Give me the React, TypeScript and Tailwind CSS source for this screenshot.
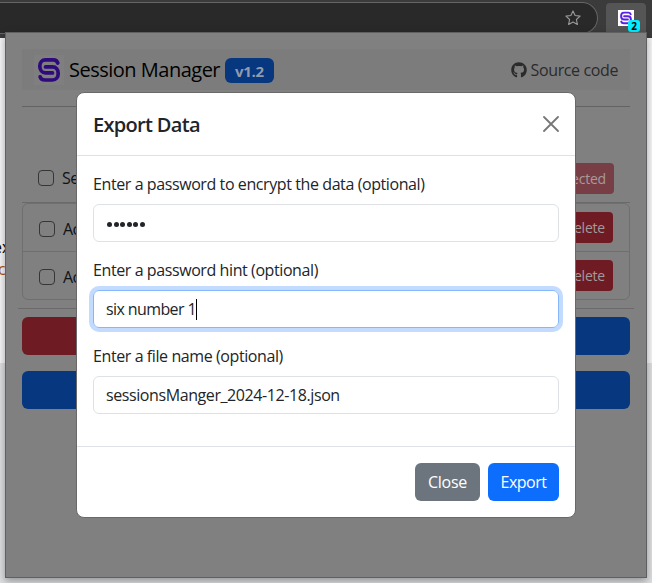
import React from "react";
import { FaGithub } from "react-icons/fa";

function Logo({ className, color }: { className: string; color: string }) {
  return (
    <svg viewBox="0 0 30 30" className={className} fill="none" stroke={color} strokeWidth="3.7" strokeLinecap="round" strokeLinejoin="round">
      <path d="M23.800 8C23 5.800 21.600 4.900 19.500 4.900H11.500C8 4.900 5.800 7.600 5.800 11.200S8 17.900 11.500 17.900H18.500" />
      <path d="M11.500 11.900H18.500C22 11.900 24.200 14.500 24.200 18.400S22 25 18.500 25H11C8.200 25 6.700 24 6.100 21.800" />
    </svg>
  );
}

function BrowserBar() {
  return (
    <div className="flex h-[38px] w-full items-start justify-between bg-[#3b3b3b] pr-[6px]">
      <div className="mt-[2px] flex h-8 w-[598px] items-center justify-end rounded-r-full border border-l-0 border-[#666] bg-[#292929] pr-[16px]">
        <svg viewBox="0 0 16 16" className="h-4 w-4" fill="none" stroke="#9a9a9a" strokeWidth="1.1" strokeLinejoin="round">
          <path d="M8 .9l2.1 4.6 5 .6-3.700 3.400 1 5L8 12l-4.400 2.500 1-5L.9 6.100l5-.6z" />
        </svg>
      </div>
      <div className="relative mt-[3px] flex h-[35px] w-10 justify-center rounded-t bg-[#555]">
        <div className="mt-[7px] h-4 w-4 bg-white">
          <Logo className="h-4 w-4" color="#5b21e6" />
        </div>
        <span className="absolute left-[22px] top-[17px] flex h-3 w-3 items-center justify-center rounded-[3px] bg-[#00f0ff] text-[10px] font-bold leading-none text-black">2</span>
      </div>
    </div>
  );
}

function Check() {
  return <span className="block h-4 w-4 shrink-0 rounded border border-[#363636]" />;
}

function DangerButton({ children, faded }: { children: React.ReactNode; faded?: boolean }) {
  return (
    <button className={`h-[31px] rounded px-2 pt-px text-[14px] leading-none tracking-[-0.2px] ${faded ? "bg-[#773f45] text-[#a79a9b]" : "bg-[#6e1b23] text-[#a39a9b]"}`}>
      {children}
    </button>
  );
}

function SessionRow() {
  return (
    <div className="flex h-[47px] items-center justify-between px-4 first:h-12 first:border-b first:border-[#6f6f6f]">
      <div className="flex items-center gap-2 pt-[2px]">
        <Check />
        <span className="tracking-[-0.5px]">Ac</span>
      </div>
      <DangerButton>Delete</DangerButton>
    </div>
  );
}

function Popup() {
  return (
    <div className="absolute left-[5px] top-8 flex h-[546px] w-[642px] flex-col border border-[#606060] bg-[#808080] px-4 pt-4 text-[#101214] shadow-[0_3px_8px_rgba(0,0,0,0.35)]">
      <nav className="flex h-[41px] items-center justify-between bg-[#7c7c7c] px-3">
        <div className="flex items-center">
          <div className="h-[30px] w-[30px] bg-[#7f7f7f]">
            <Logo className="h-[30px] w-[30px]" color="#2e0a7c" />
          </div>
          <span className="ml-[5px] w-[156px] whitespace-nowrap text-[20px] leading-[30px] tracking-[-0.5px] text-black">Session Manager</span>
          <span className="mt-[2px] flex h-[25px] w-[49px] items-center justify-center rounded-md bg-[#06377f] pt-px text-[15px] font-bold tracking-[-0.3px] text-[#8f9bae]">v1.2</span>
        </div>
        <div className="flex items-center gap-1 text-[#2b2b2b]">
          <FaGithub className="h-4 w-4" />
          <span className="pt-px tracking-[-0.38px]">Source code</span>
        </div>
      </nav>
      <div className="mt-4 h-px shrink-0 bg-[#636363]" />
      <div className="mt-[56px] flex h-[31px] items-center justify-between px-4">
        <div className="flex items-center gap-2 pb-px">
          <Check />
          <span className="tracking-[-0.5px]">Se</span>
        </div>
        <DangerButton faded>Delete selected</DangerButton>
      </div>
      <div className="mt-2 h-px shrink-0 bg-[#6a6a6a]" />
      <div className="h-[97px] shrink-0 rounded-md border border-[#6f6f6f]">
        <SessionRow />
        <SessionRow />
      </div>
      <div className="-mx-1 mt-2 h-px shrink-0 bg-[#6a6a6a]" />
      <div className="mt-2 grid grid-cols-2 gap-4">
        <div className="h-[38px] rounded-md bg-[#6e1b23]" />
        <div className="h-[38px] rounded-md bg-[#06377f]" />
        <div className="h-[38px] rounded-md bg-[#06377f]" />
        <div className="h-[38px] rounded-md bg-[#06377f]" />
      </div>
    </div>
  );
}

function Field({ label, children, focused }: { label: string; children: React.ReactNode; focused?: boolean }) {
  return (
    <div className="mb-4">
      <div className="mb-2 h-6 whitespace-nowrap leading-6 tracking-[-0.41px]">{label}</div>
      <div className={`flex h-[38px] items-center whitespace-nowrap rounded-md border px-3 ${focused ? "border-[#86b7fe] shadow-[0_0_0_4px_#c2dbfe]" : "border-[#dee2e6]"}`}>
        {children}
      </div>
    </div>
  );
}

function ExportModal() {
  return (
    <div className="absolute left-[76px] top-[92px] flex h-[426px] w-[500px] flex-col rounded-lg border border-[#696969] bg-white text-[#212529]">
      <header className="flex h-[63px] shrink-0 items-center justify-between border-b border-[#dee2e6] px-4">
        <h1 className="pt-[2px] text-[20px] font-semibold leading-[30px] tracking-[-0.68px]">Export Data</h1>
        <svg viewBox="0 0 16 16" className="h-4 w-4" stroke="#777" strokeWidth="1.8" strokeLinecap="round">
          <path d="M1 1L15 15M15 1L1 15" />
        </svg>
      </header>
      <main className="flex-1 px-4 pt-4">
        <Field label="Enter a password to encrypt the data (optional)">
          <span className="flex gap-[1.5px] pl-px pt-[2px]">
            {[0, 1, 2, 3, 4, 5].map((i) => (
              <i key={i} className="h-[5px] w-[5px] rounded-full bg-[#212529]" />
            ))}
          </span>
        </Field>
        <Field focused label="Enter a password hint (optional)">
          <span className="tracking-[-0.6px]">six number 1</span>
          <span className="h-[21px] w-px bg-black" />
        </Field>
        <Field label="Enter a file name (optional)">
          <span className="tracking-[-0.41px]">sessionsManger_2024-12-18.json</span>
        </Field>
      </main>
      <footer className="flex h-[71px] shrink-0 items-center justify-end gap-2 border-t border-[#dee2e6] px-4">
        <button className="h-[38px] w-[65px] rounded-md bg-[#6c757d] tracking-[-0.3px] text-white">Close</button>
        <button className="h-[38px] w-[71px] rounded-md bg-[#0d6efd] tracking-[-0.5px] text-white">Export</button>
      </footer>
    </div>
  );
}

export default function App() {
  return (
    <div className="relative h-[583px] w-[652px] overflow-hidden bg-[#f3f4f6] font-['Open_Sans','Noto_Sans',sans-serif] text-[16px]">
      <BrowserBar />
      <div className="h-[325px] bg-[#f6f6f8] pt-[198px] leading-[22px] text-black">
        <div className="-ml-[7px]">ex</div>
        <div className="-ml-[2px] text-[#a8550c]">c</div>
      </div>
      <div className="h-[220px] bg-[#dedfe1]" />
      <Popup />
      <ExportModal />
    </div>
  );
}
